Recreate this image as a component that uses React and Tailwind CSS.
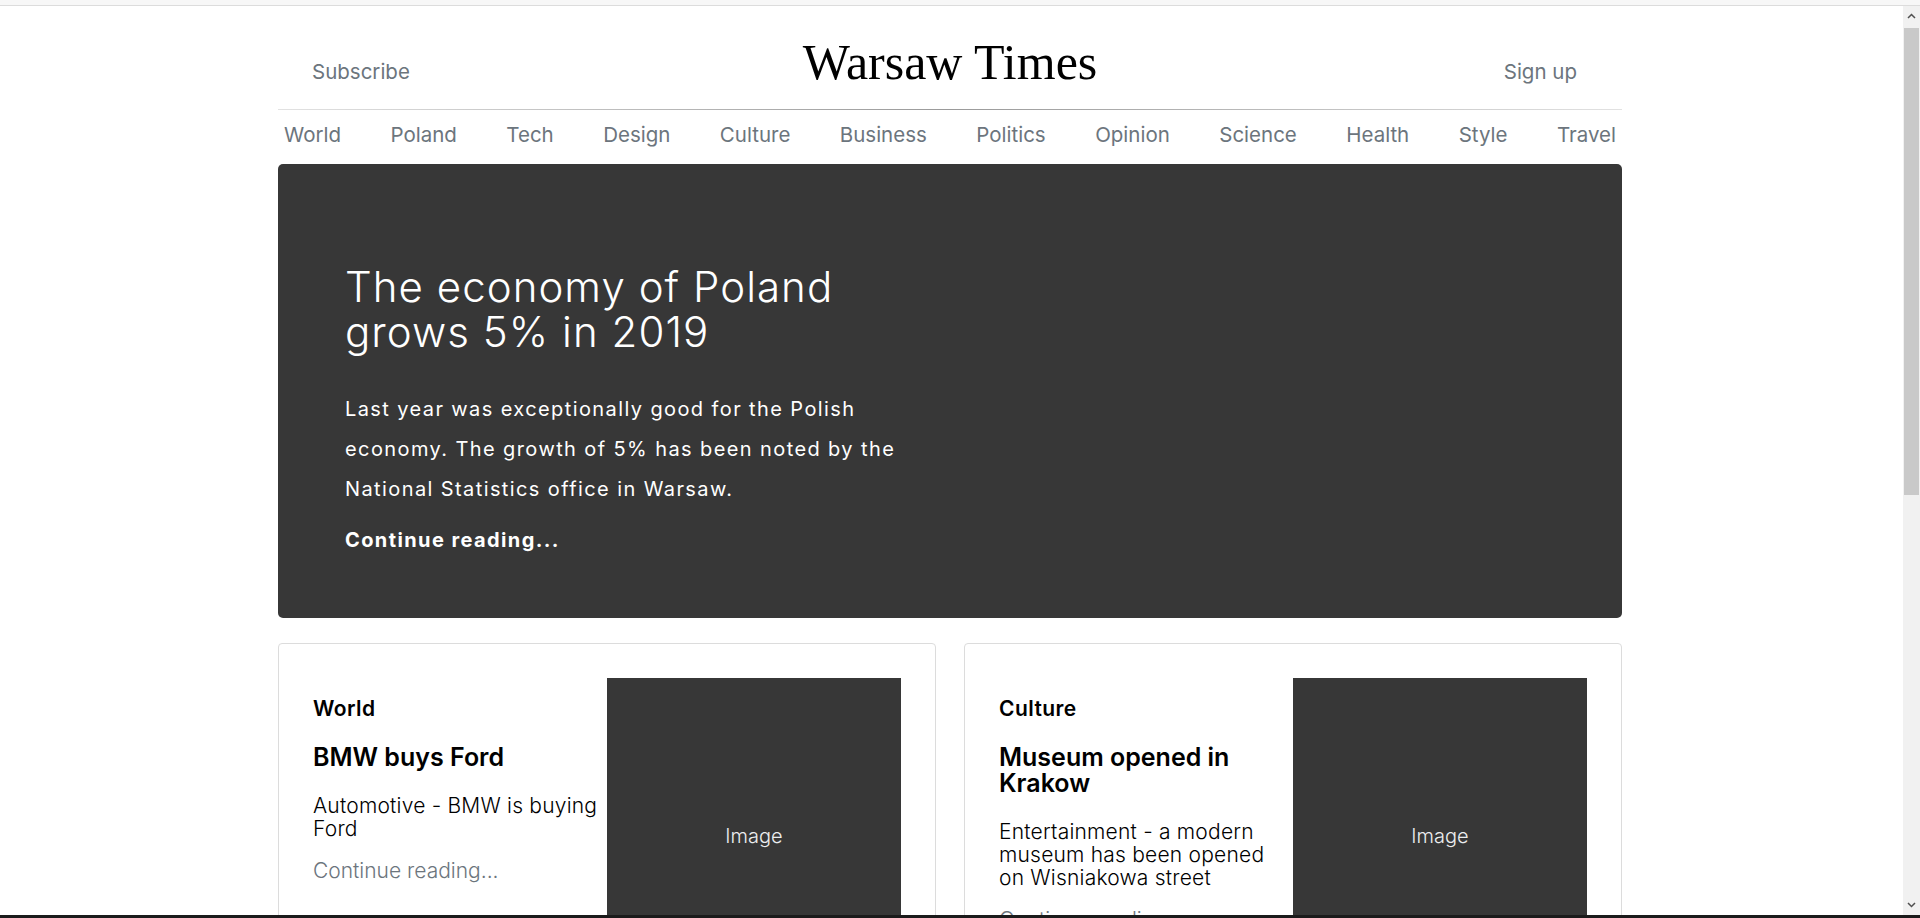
import React from 'react';

const sections = ['World', 'Poland', 'Tech', 'Design', 'Culture', 'Business', 'Politics', 'Opinion', 'Science', 'Health', 'Style', 'Travel'];

const posts = [
  { category: 'World', title: 'BMW buys Ford', text: 'Automotive - BMW is buying Ford' },
  { category: 'Culture', title: 'Museum opened in Krakow', text: 'Entertainment - a modern museum has been opened on Wisniakowa street' },
];

function Scrollbar() {
  return (
    <div className="w-[17px] shrink-0 bg-[#f1f1f1] flex flex-col items-center">
      <div className="h-[20px] w-full flex items-center justify-center">
        <svg width="9" height="6" viewBox="0 0 9 6">
          <path d="M1 5 L4.5 1.5 L8 5" fill="none" stroke="#505050" strokeWidth="1.5" />
        </svg>
      </div>
      <div className="mt-[2px] h-[467px] w-[15px] bg-[#c9c9c9]" />
      <div className="flex-1" />
      <div className="h-[20px] w-full flex items-center justify-center">
        <svg width="9" height="6" viewBox="0 0 9 6">
          <path d="M1 1 L4.5 4.5 L8 1" fill="none" stroke="#505050" strokeWidth="1.5" />
        </svg>
      </div>
    </div>
  );
}

function PostCard({ post }) {
  return (
    <div className="border border-[#dcdcdc] rounded-[4px] flex px-[34px] pt-[34px] pb-[34px]">
      <div className="flex-1 min-w-0 pt-[19px] pr-[4px]">
        <div className="text-[21px] leading-[24px] font-semibold tracking-[0.02em] text-black">{post.category}</div>
        <h3 className="mt-[23px] text-[25px] leading-[26px] font-semibold text-black">{post.title}</h3>
        <p className="mt-[24px] text-[21px] leading-[23px] font-light text-black tracking-[0.01em]">{post.text}</p>
        <a className="block mt-[19px] text-[21px] leading-[23px] font-light text-[#6c757d]">Continue reading...</a>
      </div>
      <div className="w-[294px] h-[315px] shrink-0 bg-[#373737] flex items-center justify-center text-[20px] font-light text-[#eceeef]">
        Image
      </div>
    </div>
  );
}

export default function App() {
  return (
    <div className="h-[918px] w-full overflow-hidden flex flex-col bg-white font-['Inter','Open_Sans',sans-serif]">
      <div className="h-[6px] shrink-0 bg-[#f7f7f7] border-b border-[#dcdcdc]" />
      <div className="flex-1 flex min-h-0">
        <main className="flex-1 min-w-0 overflow-hidden">
          <div className="ml-[278px] w-[1344px]">
            {/* masthead */}
            <header className="h-[103px] pt-[31px] grid grid-cols-[1fr_auto_1fr] items-baseline">
              <a className="ml-[34px] text-[20.5px] text-[#6c757d]">Subscribe</a>
              <div className="font-['Liberation_Serif',serif] text-[50px] leading-[50px] text-black">Warsaw Times</div>
              <a className="justify-self-end mr-[45px] text-[20.5px] text-[#6c757d]">Sign up</a>
            </header>
            <div className="h-px bg-gradient-to-r from-[#e2e2e2] via-[#9a9a9a] to-[#e2e2e2]" />

            <nav className="h-[54px] pb-[4px] flex items-center justify-between px-[6px]">
              {sections.map(s => (
                <a key={s} className="text-[20.5px] text-[#6c757d]">{s}</a>
              ))}
            </nav>

            {/* featured story */}
            <section className="h-[454px] rounded-[5px] bg-[#373737] pl-[67px] pt-[100px] text-white">
              <div className="w-[580px]">
                <h1 className="text-[42px] leading-[45px] font-light tracking-[0.025em]">The economy of Poland grows 5% in 2019</h1>
                <p className="mt-[35px] text-[20px] leading-[40px] tracking-[0.07em]">
                  Last year was exceptionally good for the Polish economy. The growth of 5% has been noted by the National Statistics office in Warsaw.
                </p>
                <a className="block mt-[19px] text-[20px] leading-[24px] font-bold tracking-[0.07em]">Continue reading...</a>
              </div>
            </section>

            <div className="mt-[25px] grid grid-cols-2 gap-[28px]">
              {posts.map(p => <PostCard key={p.category} post={p} />)}
            </div>
          </div>
        </main>
        <Scrollbar />
      </div>
      <div className="h-[3px] shrink-0 bg-[#1b1b1b]" />
    </div>
  );
}
